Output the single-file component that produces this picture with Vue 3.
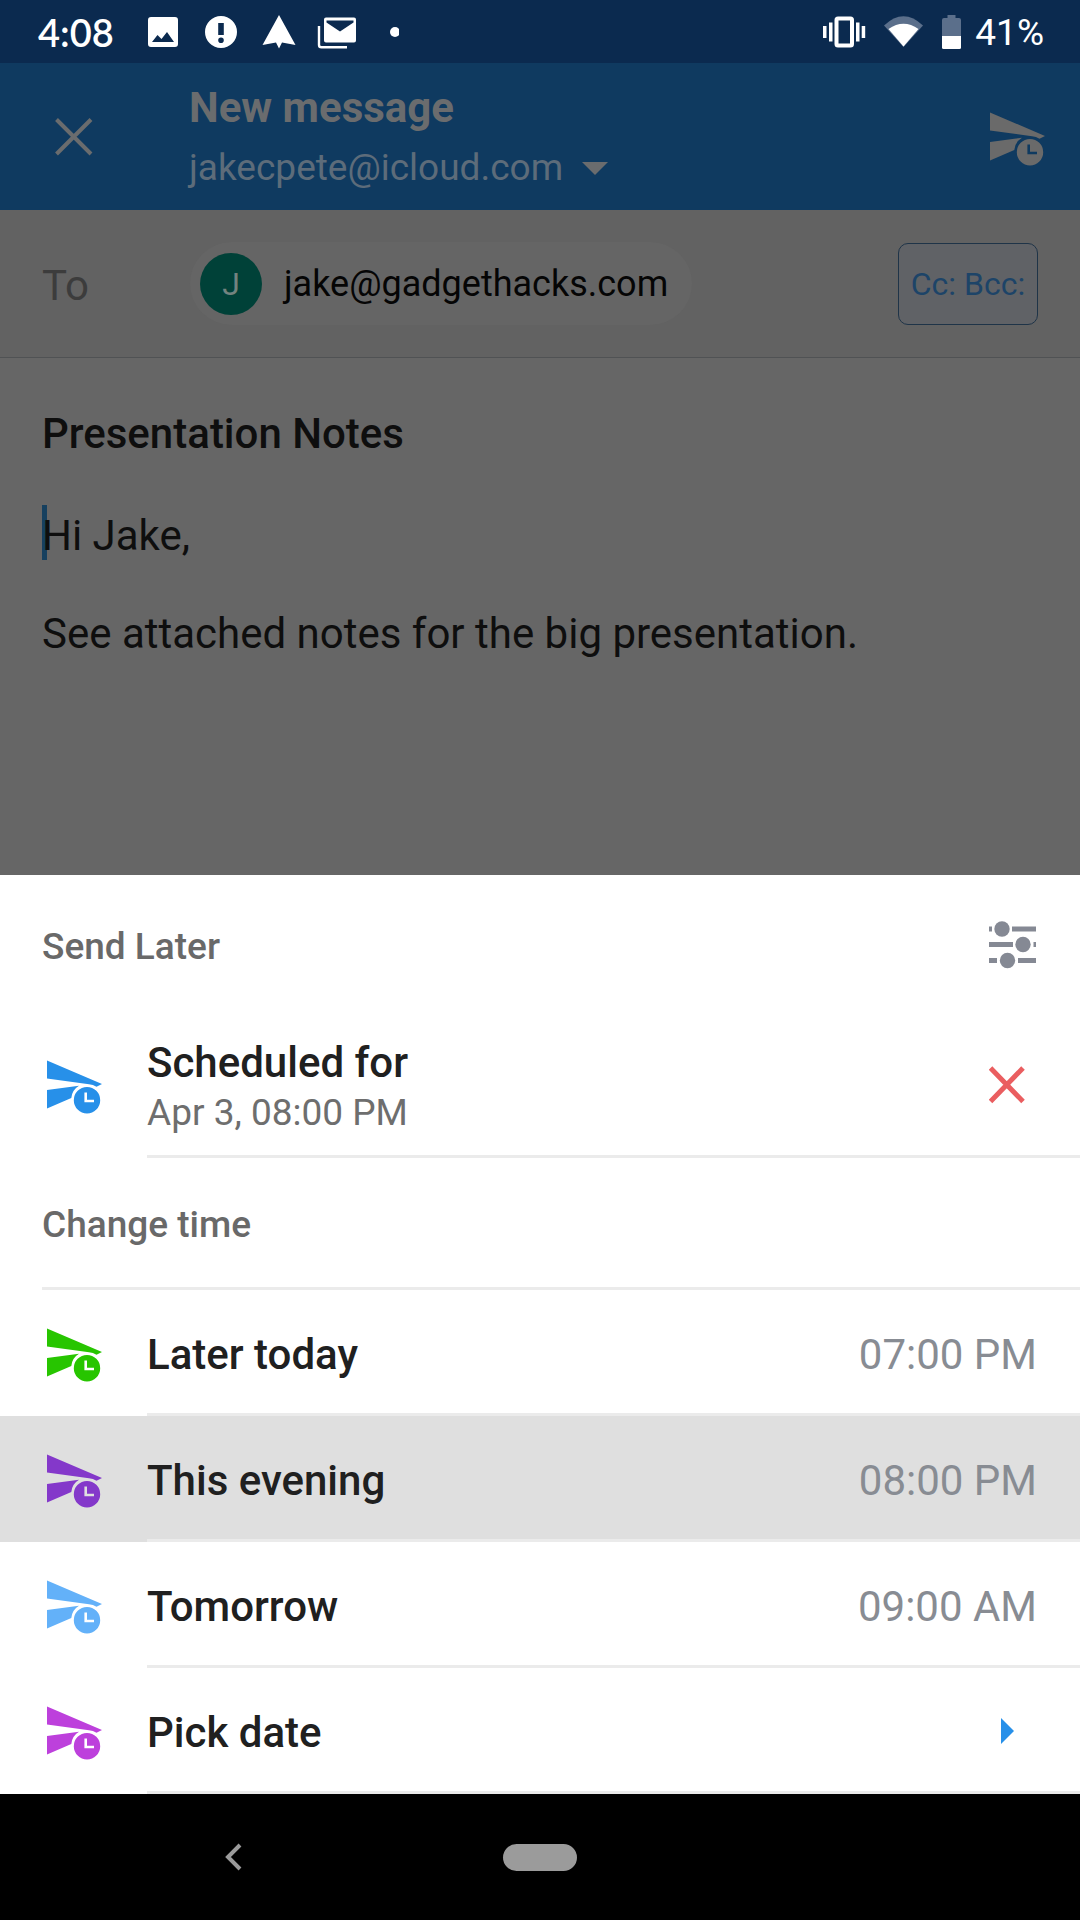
<script setup>
import { h, ref } from 'vue'

const PLANE =
  'M0 .5 55 24 49.5 26.8A16 16 0 0 0 42 24.2L0 18.5ZM0 30 32 25.8A16 16 0 0 0 24.3 38L0 48.5Z' +
  'M40 27A13.2 13.2 0 1 1 40 53.4A13.2 13.2 0 1 1 40 27ZM37.4 32.5V42.3H47V39.7H40V32.5Z'

const SendLaterIcon = (props) =>
  h(
    'svg',
    { width: 56, height: 54, viewBox: '0 0 56 54', fill: props.color, 'aria-hidden': 'true' },
    [h('path', { d: PLANE, 'fill-rule': 'evenodd' })]
  )
SendLaterIcon.props = ['color']

const subject = ref('Presentation Notes')
const body = ref('Hi Jake,\n\nSee attached notes for the big presentation.')
const selected = ref('evening')

const options = [
  { id: 'today', label: 'Later today', time: '07:00 PM', color: '#27c500' },
  { id: 'evening', label: 'This evening', time: '08:00 PM', color: '#8438ca' },
  { id: 'tomorrow', label: 'Tomorrow', time: '09:00 AM', color: '#63b1f9' },
  { id: 'pick', label: 'Pick date', time: '', color: '#bd40dc' },
]
</script>

<template>
  <div class="screen">
    <div class="status">
      <span class="clock">4:08</span>
      <svg class="status-left" width="252" height="36" viewBox="0 0 252 36" fill="#fff" aria-hidden="true">
        <path fill-rule="evenodd" d="M4 3H28Q31 3 31 6V30Q31 33 28 33H4Q1 33 1 30V6Q1 3 4 3ZM5 28H27L20 18 14.500 25 10.500 21Z" />
        <path fill-rule="evenodd" d="M74 2A16 16 0 1 1 74 34A16 16 0 1 1 74 2ZM71.200 9V21H76.800V9ZM74 23.500A2.800 2.800 0 1 0 74 29.100A2.800 2.800 0 1 0 74 23.500Z" />
        <path d="M132 1 148.500 31 135 28.500 132 34.500 129 28.500 115.500 31Z" />
        <path fill-rule="evenodd" d="M179 3.500H207Q209 3.500 209 5.500V26.500Q209 28.500 207 28.500H179Q177 28.500 177 26.500V5.500Q177 3.500 179 3.500ZM179.500 6.500V8.500L193 17.500 206.500 8.500V6.500Z" />
        <path d="M172 12V31Q172 33.300 174.500 33.300H200" fill="none" stroke="#fff" stroke-width="2.400" />
        <circle cx="248" cy="18" r="5" />
      </svg>
      <svg class="status-right" width="140" height="36" viewBox="0 0 140 36" fill="#fff" aria-hidden="true">
        <path d="M0 12H3.500V24H0ZM6 8.500H9.500V27.500H6ZM33 8.500H36.500V27.500H33ZM38.700 12H42.200V24H38.700Z" />
        <rect x="13.500" y="4.500" width="15.500" height="27" rx="1.500" fill="none" stroke="#fff" stroke-width="4" />
        <path fill="#5b6f8b" d="M61 11.500Q80.500-7 100 11.500L80.500 33Z" />
        <path d="M65.500 15Q80.500 4.500 95.500 15L80.500 32.500Z" />
        <path fill="#5b6f8b" d="M124.500 1H132.500V4H136Q138 4 138 6V22H119V6Q119 4 121 4H124.500Z" />
        <path d="M119 22H138V33.500Q138 35 136.500 35H120.500Q119 35 119 33.500Z" />
      </svg>
      <span class="battery">41%</span>
    </div>

    <header class="bar">
      <button class="icon-btn close" type="button" aria-label="Close">
        <svg width="38" height="38" viewBox="0 0 38 38" stroke="#6a6c6e" stroke-width="4"><path d="M1.500 1.500 36 36M36 1.500 1.500 36" /></svg>
      </button>
      <div class="heading">
        <h1>New message</h1>
        <button class="account" type="button">
          <span>jakecpete@icloud.com</span>
          <svg width="26" height="13" viewBox="0 0 26 13" fill="#6a6c6e" aria-hidden="true"><path d="M0 0H26L13 13Z" /></svg>
        </button>
      </div>
      <button class="icon-btn send" type="button" aria-label="Send later"><SendLaterIcon color="#6a6a6a" /></button>
    </header>

    <main class="compose">
      <div class="to-row">
        <span class="to">To</span>
        <span class="chip"><span class="avatar">J</span>jake@gadgethacks.com</span>
        <button class="cc" type="button">Cc: Bcc:</button>
      </div>
      <div class="message">
        <input v-model="subject" class="subject" type="text" aria-label="Subject" />
        <div class="body-wrap">
          <span class="caret"></span>
          <textarea v-model="body" class="body" rows="3" aria-label="Message"></textarea>
        </div>
      </div>
    </main>

    <section class="sheet">
      <div class="sheet-head">
        <h2>Send Later</h2>
        <button class="icon-btn" type="button" aria-label="Settings">
          <svg width="48" height="48" viewBox="0 0 48 48" fill="#858994">
            <path d="M0 5.500H3V10.500H0ZM23 5.500H47V10.500H23ZM0 21H24V26H0ZM44.500 21H47V26H44.500ZM0 37H8V42H0ZM29 37H47V42H29Z" />
            <circle cx="13" cy="8" r="7.700" /><circle cx="34" cy="23.500" r="7.700" /><circle cx="18.500" cy="39.500" r="7.700" />
          </svg>
        </button>
      </div>

      <div class="scheduled">
        <SendLaterIcon color="#2790e9" />
        <div class="scheduled-main">
          <div class="scheduled-text">
            <strong>Scheduled for</strong>
            <span>Apr 3, 08:00 PM</span>
          </div>
          <button class="icon-btn cancel" type="button" aria-label="Cancel schedule">
            <svg width="36" height="38" viewBox="0 0 36 38" stroke="#ea5e60" stroke-width="5"><path d="M1.500 2 34 35.500M34 2 1.500 35.500" /></svg>
          </button>
        </div>
      </div>

      <h2 class="change">Change time</h2>

      <ul class="options">
        <li v-for="o in options" :key="o.id">
          <button class="option" :class="{ active: selected === o.id }" type="button" @click="selected = o.id">
            <SendLaterIcon :color="o.color" />
            <span class="option-main">
              <span class="label">{{ o.label }}</span>
              <span v-if="o.time" class="time">{{ o.time }}</span>
              <svg v-else class="more" width="13" height="26" viewBox="0 0 13 26" fill="#2790e9" aria-hidden="true"><path d="M0 0 13 13 0 26Z" /></svg>
            </span>
          </button>
        </li>
      </ul>
    </section>

    <nav class="nav">
      <button class="icon-btn back" type="button" aria-label="Back">
        <svg width="17" height="28" viewBox="0 0 17 28" fill="none" stroke="#9b9b9b" stroke-width="4"><path d="M15 2 3 14 15 26" /></svg>
      </button>
      <button class="home" type="button" aria-label="Home"></button>
      <span></span>
    </nav>
  </div>
</template>

<style>
body {
  margin: 0;
  background: #000;
}
</style>

<style scoped>
.screen {
  min-height: 100vh;
  display: flex;
  flex-direction: column;
  font-family: Roboto, "Liberation Sans", sans-serif;
  background: #666;
  color: #202020;
}
h1,
h2,
ul {
  margin: 0;
  padding: 0;
}
svg {
  display: block;
  flex: none;
}
button,
input,
textarea {
  margin: 0;
  padding: 0;
  border: 0;
  background: none;
  font: inherit;
  color: inherit;
  outline: none;
}
.icon-btn {
  display: flex;
  align-items: center;
}

.status {
  height: 63px;
  display: flex;
  align-items: center;
  padding: 0 36px 0 38px;
  background: #0b2a4f;
  color: #fff;
}
.clock {
  width: 109px;
  font-family: Lato, Roboto, sans-serif;
  font-size: 38px;
  font-weight: 600;
  line-height: 44px;
}
.status-right {
  margin-left: auto;
}
.battery {
  margin-left: 12px;
  padding-top: 3px;
  font-size: 37px;
  line-height: 44px;
}

.bar {
  display: flex;
  align-items: center;
  padding: 0 34px 0 55px;
  background: #0f3a60;
  color: #6a6c6e;
}
.close {
  width: 134px;
}
.send {
  padding-top: 4px;
}
.heading {
  flex: 1;
  display: flex;
  flex-direction: column;
  gap: 12px;
  padding: 21px 0 18px;
}
.heading h1 {
  font-size: 42px;
  line-height: 48px;
  font-weight: 700;
}
.account {
  display: flex;
  align-items: center;
  gap: 19px;
  font-size: 37px;
  line-height: 48px;
  color: #5d6c7a;
}

.compose {
  flex: 1;
}
.to-row {
  height: 147px;
  display: flex;
  align-items: center;
  padding: 0 42px;
  background: #626262;
  border-bottom: 1px solid #505254;
}
.to {
  width: 148px;
  padding-top: 4px;
  font-size: 42px;
  line-height: 48px;
  color: #3c3c3c;
}
.chip {
  height: 83px;
  box-sizing: border-box;
  display: flex;
  align-items: center;
  gap: 22px;
  padding: 0 24px 0 10px;
  border-radius: 42px;
  background: #656565;
  font-size: 36px;
  color: #050505;
}
.avatar {
  width: 62px;
  height: 62px;
  border-radius: 50%;
  display: flex;
  align-items: center;
  justify-content: center;
  background: #004138;
  color: #73837f;
  font-size: 32px;
}
.cc {
  width: 140px;
  height: 82px;
  box-sizing: border-box;
  margin-left: auto;
  border: 1px solid #1f3448;
  border-radius: 10px;
  background: #606266;
  color: #1d4468;
  font-size: 32px;
  white-space: nowrap;
}
.message {
  padding: 48px 42px;
  color: #0e0e0e;
  font-size: 42px;
}
.subject {
  display: block;
  width: 100%;
  height: 56px;
  line-height: 56px;
  font-weight: 500;
}
.body-wrap {
  position: relative;
  margin-top: 49px;
}
.caret {
  position: absolute;
  left: 0;
  top: -6px;
  width: 5px;
  height: 55px;
  background: #16405f;
}
.body {
  position: relative;
  display: block;
  width: 100%;
  line-height: 49px;
  resize: none;
  overflow: hidden;
}

.sheet {
  background: #fff;
}
.sheet-head {
  height: 140px;
  box-sizing: border-box;
  display: flex;
  align-items: center;
  justify-content: space-between;
  padding: 0 43px 0 42px;
}
h2 {
  padding-top: 4px;
  font-size: 37px;
  line-height: 44px;
  font-weight: 500;
  color: #696969;
}
.scheduled {
  display: flex;
  align-items: center;
  gap: 44px;
  padding-left: 47px;
}
.scheduled-main {
  flex: 1;
  display: flex;
  align-items: center;
  justify-content: space-between;
  padding: 23px 55px 17px 0;
  border-bottom: 3px solid #ebebeb;
}
.scheduled-text {
  display: flex;
  flex-direction: column;
  line-height: 50px;
}
.scheduled-text strong {
  font-size: 42px;
  font-weight: 500;
}
.scheduled-text span {
  font-size: 37px;
  color: #6e6e6e;
}
.cancel {
  padding-bottom: 6px;
}
.change {
  margin-left: 42px;
  padding: 45px 0 40px;
  border-bottom: 3px solid #ebebeb;
}
.options {
  list-style: none;
}
.option {
  width: 100%;
  display: flex;
  align-items: center;
  gap: 44px;
  padding-left: 47px;
  text-align: left;
}
.option > svg {
  margin-top: 3px;
}
.active {
  background: #dfdfdf;
}
.option-main {
  flex: 1;
  height: 126px;
  box-sizing: border-box;
  display: flex;
  align-items: center;
  justify-content: space-between;
  padding: 6px 43px 0 0;
  border-bottom: 3px solid #ebebeb;
  font-size: 42px;
  line-height: 48px;
}
.label {
  font-weight: 500;
}
.time {
  color: #888c93;
}
.more {
  margin: 0 23px 4px 0;
}

.nav {
  height: 126px;
  display: grid;
  grid-template-columns: 1fr 74px 1fr;
  align-items: center;
  background: #000;
}
.back {
  justify-self: center;
  padding-right: 36px;
}
.home {
  height: 27px;
  border-radius: 14px;
  background: #9b9b9b;
}
</style>
